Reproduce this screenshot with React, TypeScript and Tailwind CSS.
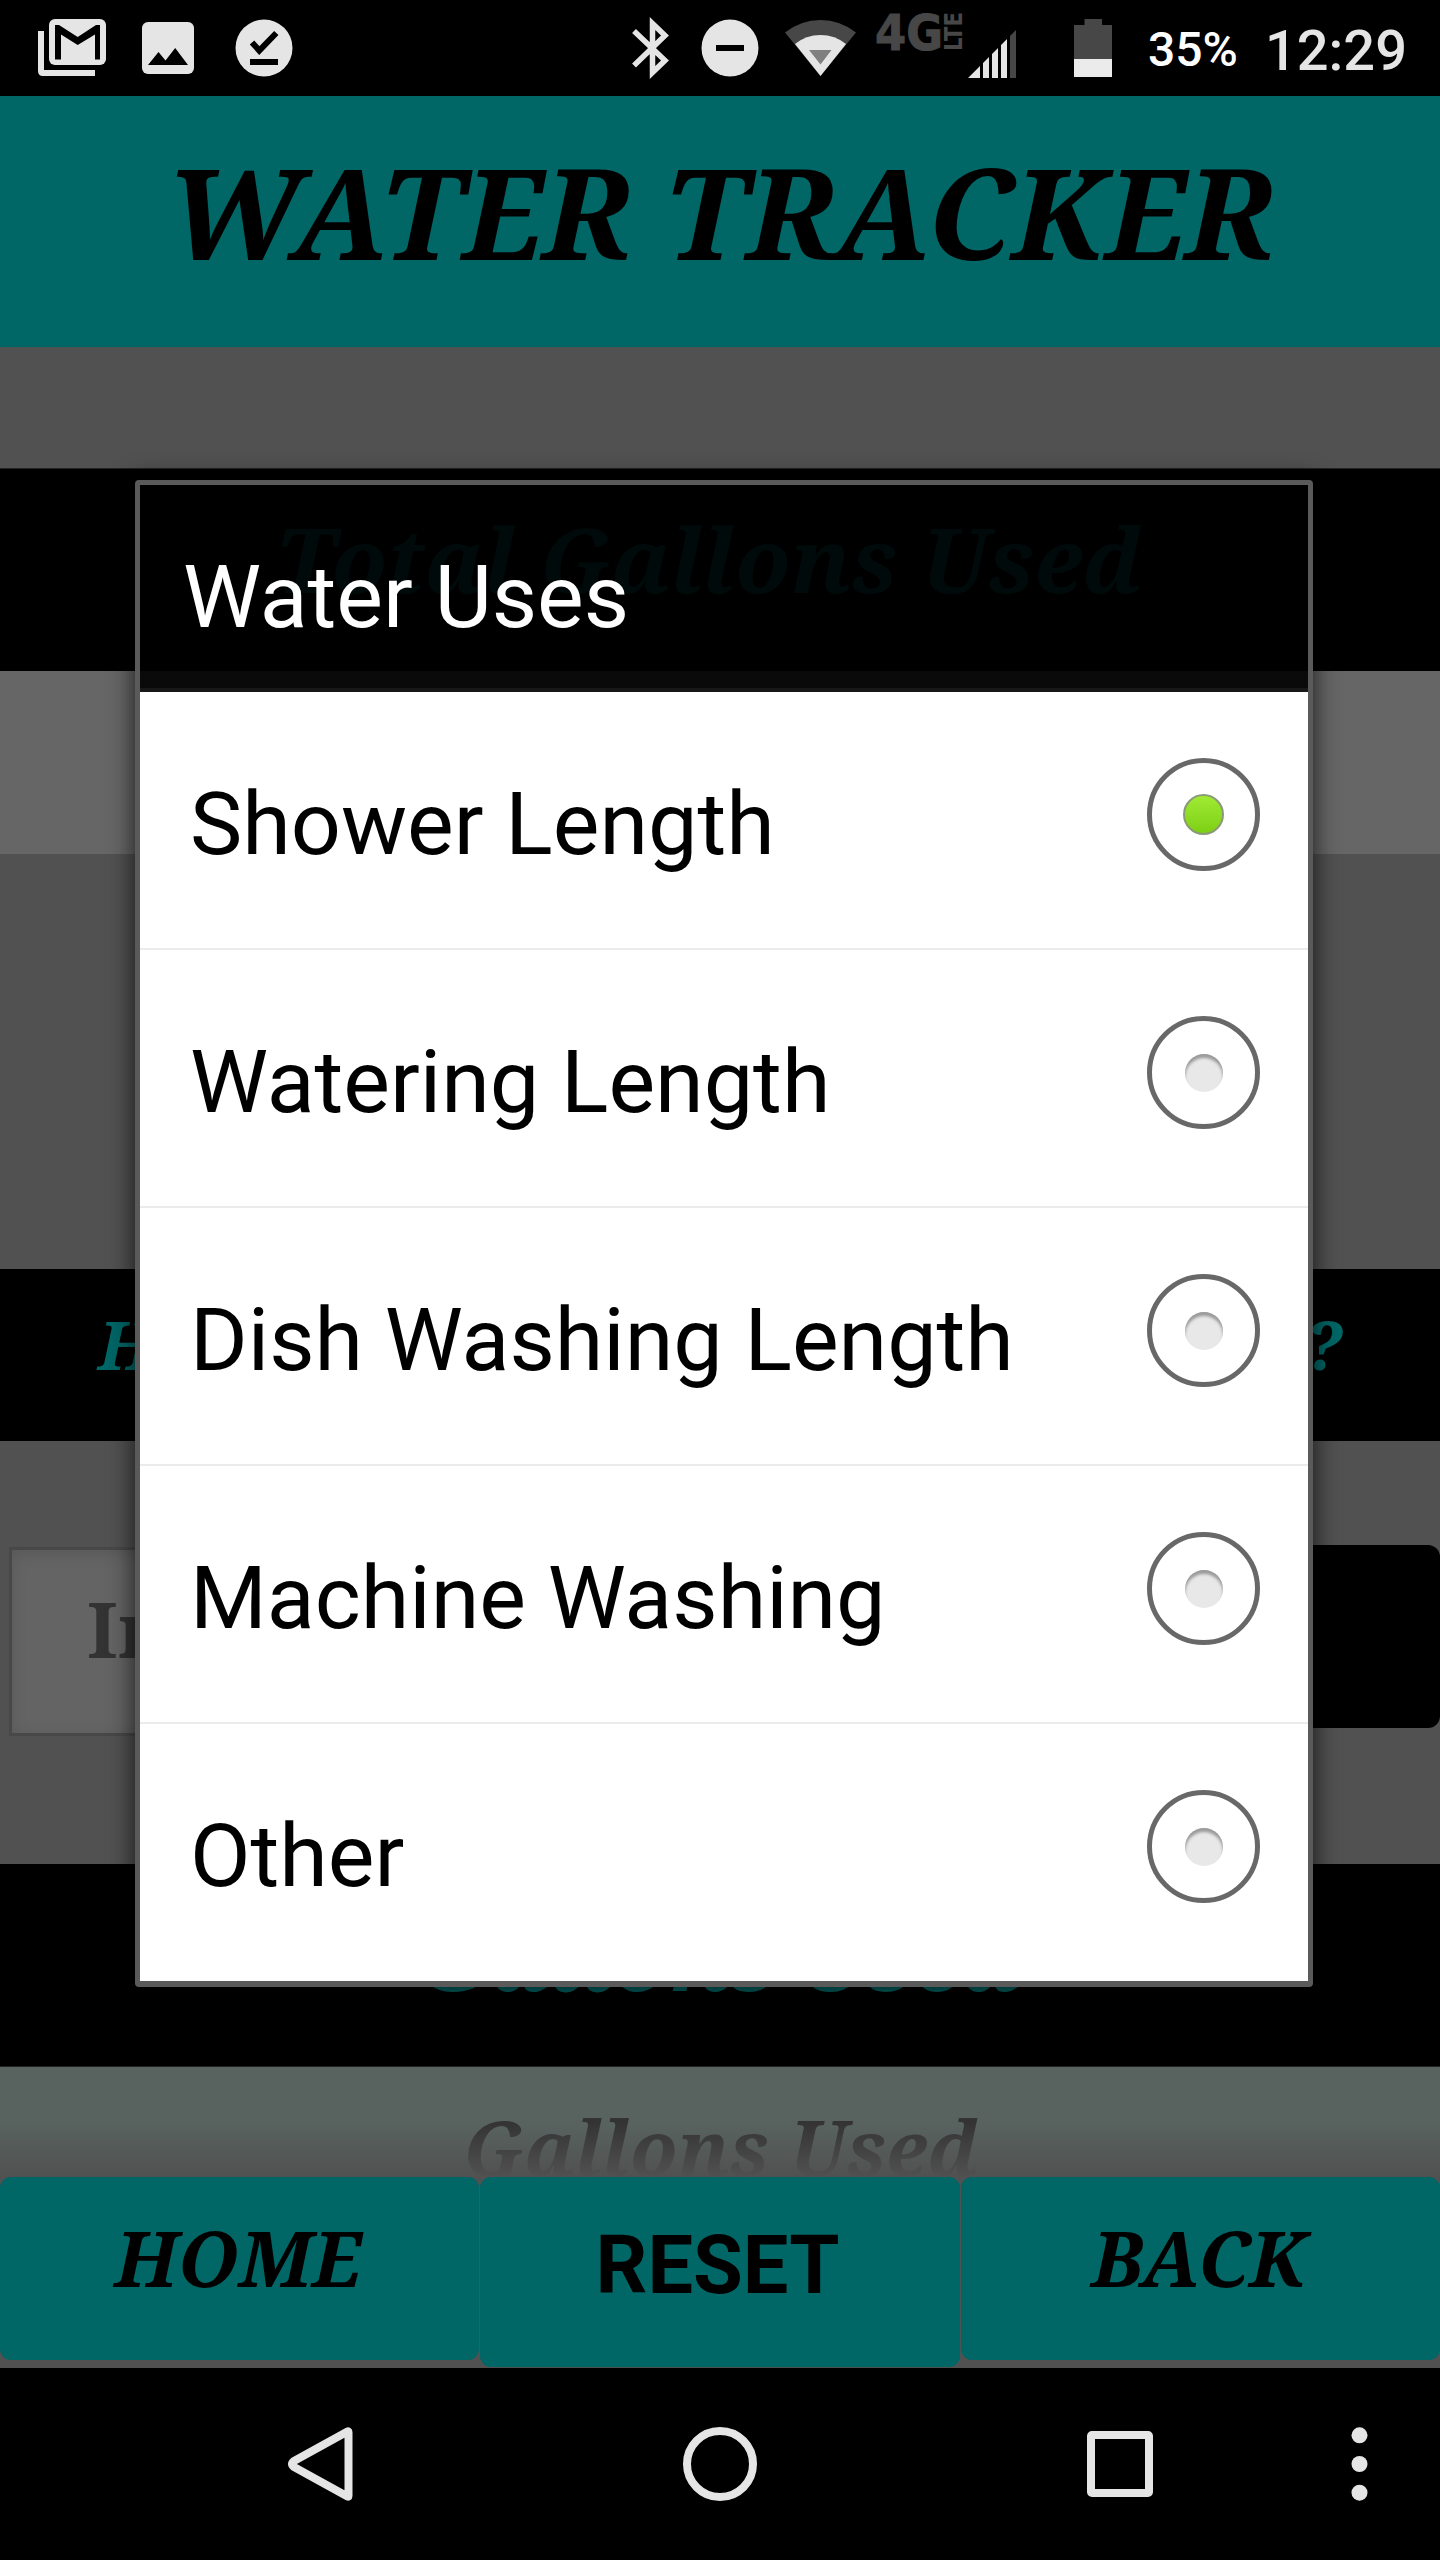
import clsx from "clsx";
import type { ReactNode } from "react";

interface WaterUse {
  id: string;
  label: string;
}

const WATER_USES: WaterUse[] = [
  { id: "shower", label: "Shower Length" },
  { id: "watering", label: "Watering Length" },
  { id: "dishes", label: "Dish Washing Length" },
  { id: "machine", label: "Machine Washing" },
  { id: "other", label: "Other" },
];

const serif = "font-['Noto_Serif','DejaVu_Serif_Condensed','DejaVu_Serif',serif] font-bold";

function StatusBar() {
  return (
    <div className="flex h-[96px] shrink-0 items-center bg-black text-[#e5e5e5]">
      <svg className="h-[96px] w-[1120px] shrink-0" viewBox="0 0 1120 96" fill="#e5e5e5">
        {/* mail */}
        <path d="M38 31h6v39h51v6H43q-5 0-5-5z" />
        <rect x="49" y="19" width="57" height="46" rx="6" />
        <path d="M55 59.500V25h4l18.700 12L96 25h4v34.500h-5V34.500L77.700 45 61 34.500v25z" fill="#000" />
        {/* photo */}
        <rect x="142" y="22" width="52" height="52" rx="6" />
        <path d="M148 65l10.500-13 7 8.500L175.200 48 188 65z" fill="#000" />
        {/* done */}
        <circle cx="264" cy="48" r="28.500" />
        <path d="M252 42.500l7.300 8 17-17.500M250 62h28" stroke="#000" strokeWidth="6" fill="none" />
        {/* bluetooth */}
        <path
          d="M634 31l31 29.500-12.500 12V23.500l12.500 12L634 65.500"
          fill="none"
          stroke="#e5e5e5"
          strokeWidth="5.500"
        />
        {/* do not disturb */}
        <circle cx="730" cy="48" r="28.500" />
        <path d="M716 45h28v6h-28z" fill="#000" />
        {/* wifi */}
        <path d="M785 32.500Q801 20 820.500 20T856 32.500L820.500 76z" fill="#474747" />
        <path d="M795 44Q806 35 820.500 35T846 44L820.500 76z" />
        <path d="M809 50h22.500L820.500 64.500z" fill="#808080" />
        <text
          x="875"
          y="50"
          fill="#474747"
          stroke="#474747"
          strokeWidth="1"
          fontSize="50"
          fontWeight="700"
          textLength="68"
          lengthAdjust="spacingAndGlyphs"
          className="font-['DejaVu_Sans',sans-serif]"
        >
          4G
        </text>
        <text
          transform="translate(962 51) rotate(-90)"
          fill="#474747"
          fontSize="25"
          fontWeight="700"
          textLength="39"
          lengthAdjust="spacingAndGlyphs"
          className="font-['DejaVu_Sans',sans-serif]"
        >
          LTE
        </text>
        {/* signal */}
        <path d="M968 78l12-12v12zM983 78V63l6-6v21zM992 78V54l6-6v30zM1001 78V45l6-6v39z" />
        <path d="M1010 78V36l6-6v48z" fill="#474747" />
        {/* battery */}
        <path d="M1074 25h10.500v-6H1102v6h10v34h-38z" fill="#474747" />
        <path d="M1074 59h38v18h-38z" fill="#ebebeb" />
      </svg>
      <span className="ml-[28px] pt-[3px] font-['Roboto',sans-serif] text-[48px] leading-none font-medium text-white">
        35%
      </span>
      <span className="ml-[27px] pt-[5px] font-['Roboto',sans-serif] text-[56px] leading-none font-medium">
        12:29
      </span>
    </div>
  );
}

function NavBar() {
  return (
    <div className="h-[192px] shrink-0 bg-black">
      <svg className="h-[192px] w-[1440px]" viewBox="0 0 1440 192" fill="none" stroke="#e5e5e5" strokeWidth="8">
        <path d="M348.500 64v64q0 1-1 .5L294 99q-4-3 0-6l53.500-29.500q1-.5 1 .5z" strokeLinejoin="round" />
        <circle cx="720" cy="96" r="33" />
        <rect x="1091" y="67" width="58" height="58" rx="1" strokeLinejoin="round" />
        <g fill="#e5e5e5" stroke="none">
          <circle cx="1359.500" cy="67.300" r="8" />
          <circle cx="1359.500" cy="96" r="8" />
          <circle cx="1359.500" cy="124.700" r="8" />
        </g>
      </svg>
    </div>
  );
}

function Radio({ checked }: { checked: boolean }) {
  return (
    <span className="flex size-[113px] shrink-0 items-center justify-center rounded-full border-[5px] border-[#686868]">
      <span
        className={clsx(
          "rounded-full",
          checked
            ? "size-[41px] border-2 border-[#8a9a78] bg-linear-to-b from-[#a0ea32] to-[#7dd013]"
            : "size-[38px] bg-[#e8e8e8] shadow-[inset_0_4px_3px_#9a9a9a]",
        )}
      />
    </span>
  );
}

function ActionButton({ children, className }: { children: ReactNode; className?: string }) {
  return (
    <button className={clsx("flex items-center justify-center rounded-[11px] bg-[#006666] text-black", className)}>
      {children}
    </button>
  );
}

function UsesDialog({ selected }: { selected: string }) {
  return (
    <div className="absolute top-[480px] left-[135px] flex h-[1507px] w-[1178px] flex-col rounded-[4px] border-5 border-b-6 border-[#5a5a5a] shadow-[0_2px_26px_rgba(0,0,0,0.75)]">
      <div className="flex h-[207px] shrink-0 items-center border-b-4 border-[#181818] bg-black/90 pt-[21px] pl-[43px]">
        <h2 className="font-['Roboto',sans-serif] text-[88px] leading-none text-white">Water Uses</h2>
      </div>
      <ul className="flex-1 divide-y-2 divide-[#ebebeb] bg-white">
        {WATER_USES.map((use) => (
          <li key={use.id} className="box-content flex h-[256px] items-center justify-between">
            <span className="pt-[7px] pl-[50px] font-['Roboto',sans-serif] text-[88px] leading-none text-black">
              {use.label}
            </span>
            <span className="mr-[48px] mb-[11px]">
              <Radio checked={use.id === selected} />
            </span>
          </li>
        ))}
      </ul>
    </div>
  );
}

export default function App() {
  return (
    <div className="relative flex h-[2560px] w-[1440px] flex-col overflow-hidden bg-[#515151] whitespace-nowrap">
      <StatusBar />
      <header className="flex h-[251px] shrink-0 items-center justify-center bg-[#006666] pb-[22px]">
        <h1 className={clsx(serif, "text-[126px] leading-none text-black italic")}>WATER TRACKER</h1>
      </header>

      <div className="mt-[121px] flex h-[203px] shrink-0 items-center justify-center border-t border-[#222222] bg-black pr-[22px] pb-[25px]">
        <span className={clsx(serif, "text-[90px] leading-none text-[#006666] italic")}>Total Gallons Used</span>
      </div>
      <div className="h-[183px] shrink-0 bg-[#666666]" />

      <div className="mt-[415px] flex h-[172px] shrink-0 items-center justify-between bg-black pr-[98px] pb-[22px] pl-[98px]">
        <span className={clsx(serif, "text-[68px] leading-none text-[#006666] italic")}>H</span>
        <span className={clsx(serif, "text-[68px] leading-none text-[#006666] italic")}>?</span>
      </div>

      <div className="mt-[104px] flex h-[191px] shrink-0 items-start justify-between pl-[9px]">
        <div className="mt-[2px] flex h-[189px] w-[700px] items-center border-3 border-[#484848] bg-[#646464] pb-[26px] pl-[75px] shadow-[inset_0_4px_16px_rgba(0,0,0,0.12)]">
          <span className={clsx(serif, "text-[77px] leading-none text-[#333333]")}>In</span>
        </div>
        <div className="h-[183px] w-[700px] rounded-[12px] bg-black" />
      </div>

      <div className="mt-[128px] flex h-[203px] shrink-0 items-center justify-center border-b border-[#222222] bg-black pb-[18px]">
        <span className={clsx(serif, "text-[90px] leading-none text-[#006666] italic")}>Gallons Used</span>
      </div>
      <div className="relative flex h-[110px] shrink-0 items-start justify-center bg-[#586360] pt-[41px] pl-[2px]">
        <span className={clsx(serif, "text-[77px] leading-none text-[#333333] italic")}>Gallons Used</span>
        <div className="absolute inset-x-0 bottom-0 h-[56px] bg-linear-to-b from-[#515151]/0 to-[#515151]" />
      </div>

      <div className="grid h-[191px] shrink-0 grid-cols-3 items-start gap-px">
        <ActionButton className="h-[183px] pr-[4px] pb-[22px]">
          <span className={clsx(serif, "text-[77px] leading-none italic")}>HOME</span>
        </ActionButton>
        <ActionButton className="h-[190px] pr-[5px] pb-[14px]">
          <span className="font-['Roboto',sans-serif] text-[81px] leading-none font-bold">RESET</span>
        </ActionButton>
        <ActionButton className="h-[183px] pr-[3px] pb-[22px]">
          <span className={clsx(serif, "text-[77px] leading-none italic")}>BACK</span>
        </ActionButton>
      </div>
      <NavBar />

      <UsesDialog selected="shower" />
    </div>
  );
}
